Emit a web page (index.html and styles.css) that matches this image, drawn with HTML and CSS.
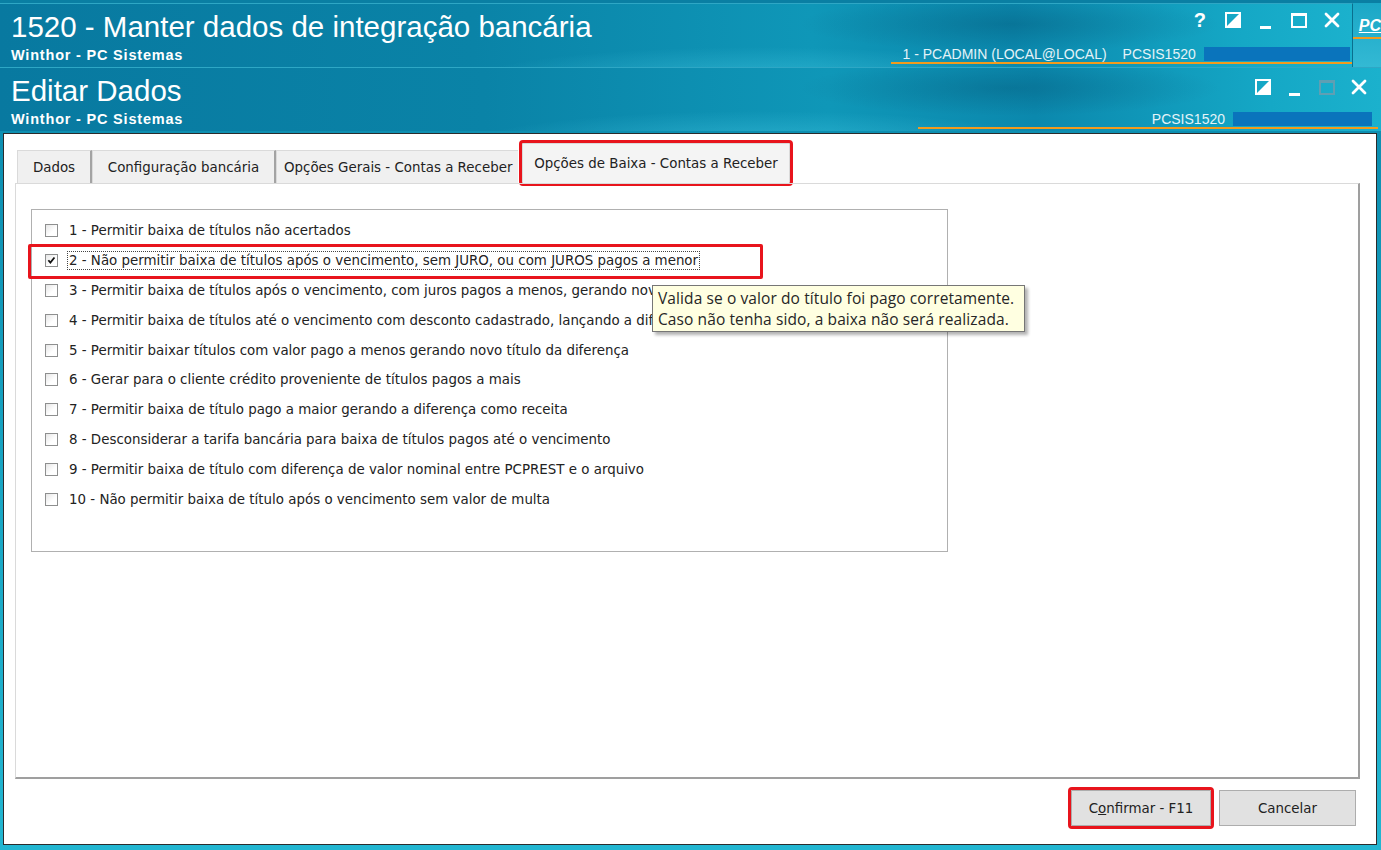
FILE: index.html
```html
<!DOCTYPE html>
<html lang="pt-BR">
<head>
<meta charset="utf-8">
<title>1520 - Manter dados de integração bancária</title>
<link rel="stylesheet" href="styles.css">
</head>
<body>
<div class="screen">
  <div class="top-row">
    <header class="head head--main">
      <div class="head-left">
        <div class="head-title">1520 - Manter dados de integração bancária</div>
        <div class="head-sub">Winthor - PC Sistemas</div>
      </div>
      <div class="head-right head-right--main">
        <div class="controls">
          <span class="ctl ctl-help">?</span>
          <svg class="ctl" viewBox="0 0 20 20"><rect x="3" y="3" width="14" height="14" fill="none" stroke="#fff" stroke-width="2"/><path d="M17 3 L17 17 L3 17 Z" fill="#fff"/></svg>
          <svg class="ctl" viewBox="0 0 20 20"><rect x="4" y="16" width="11" height="3" fill="#fff"/></svg>
          <svg class="ctl" viewBox="0 0 20 20"><rect x="3" y="4" width="14" height="13" fill="none" stroke="#fff" stroke-width="2"/><rect x="3" y="3" width="14" height="3" fill="#fff"/></svg>
          <svg class="ctl" viewBox="0 0 20 20"><path d="M4 4 L16 16 M16 4 L4 16" stroke="#fff" stroke-width="2.8" stroke-linecap="round"/></svg>
        </div>
        <div class="info">
          <span class="info-user">1 - PCADMIN (LOCAL@LOCAL)</span>
          <span class="info-code">PCSIS1520</span>
          <span class="bluebox bluebox--main"></span>
        </div>
      </div>
    </header>
    <div class="side"><div class="side-bar"><span class="side-link">PC</span></div></div>
  </div>

  <div class="win2">
    <header class="head head--sub">
      <div class="head-left">
        <div class="head-title">Editar Dados</div>
        <div class="head-sub">Winthor - PC Sistemas</div>
      </div>
      <div class="head-right head-right--sub">
        <div class="controls controls--sub">
          <svg class="ctl" viewBox="0 0 20 20"><rect x="3" y="3" width="14" height="14" fill="none" stroke="#fff" stroke-width="2"/><path d="M17 3 L17 17 L3 17 Z" fill="#fff"/></svg>
          <svg class="ctl" viewBox="0 0 20 20"><rect x="4" y="16" width="11" height="3" fill="#fff"/></svg>
          <svg class="ctl" viewBox="0 0 20 20"><rect x="3" y="4" width="14" height="13" fill="none" stroke="#5f9fb3" stroke-width="2"/><rect x="3" y="3" width="14" height="3" fill="#5f9fb3"/></svg>
          <svg class="ctl" viewBox="0 0 20 20"><path d="M4 4 L16 16 M16 4 L4 16" stroke="#fff" stroke-width="2.8" stroke-linecap="round"/></svg>
        </div>
        <div class="info info--sub">
          <span class="info-code">PCSIS1520</span>
          <span class="bluebox bluebox--sub"></span>
        </div>
      </div>
    </header>

    <div class="frame">
      <div class="dialog">
        <div class="tabs">
          <div class="tab tab--dados">Dados</div>
          <div class="tab tab--config">Configuração bancária</div>
          <div class="tab tab--gerais">Opções Gerais - Contas a Receber</div>
          <div class="tab tab--active">Opções de Baixa - Contas a Receber</div>
        </div>
        <div class="panel">
          <div class="group">
            <div class="opt"><span class="cb"></span><span class="lbl">1 - Permitir baixa de títulos não acertados</span></div>
            <div class="opt"><span class="cb cb--on"><svg viewBox="0 0 13 13"><path d="M2.8 6.2 L5.2 9 L10 3" fill="none" stroke="#111" stroke-width="2.1"/></svg></span><span class="lbl lbl--focus">2 - Não permitir baixa de títulos após o vencimento, sem JURO, ou com JUROS pagos a menor</span></div>
            <div class="opt"><span class="cb"></span><span class="lbl">3 - Permitir baixa de títulos após o vencimento, com juros pagos a menos, gerando nov</span></div>
            <div class="opt"><span class="cb"></span><span class="lbl">4 - Permitir baixa de títulos até o vencimento com desconto cadastrado, lançando a dif</span></div>
            <div class="opt"><span class="cb"></span><span class="lbl">5 - Permitir baixar títulos com valor pago a menos gerando novo título da diferença</span></div>
            <div class="opt"><span class="cb"></span><span class="lbl">6 - Gerar para o cliente crédito proveniente de títulos pagos a mais</span></div>
            <div class="opt"><span class="cb"></span><span class="lbl">7 - Permitir baixa de título pago a maior gerando a diferença como receita</span></div>
            <div class="opt"><span class="cb"></span><span class="lbl">8 - Desconsiderar a tarifa bancária para baixa de títulos pagos até o vencimento</span></div>
            <div class="opt"><span class="cb"></span><span class="lbl">9 - Permitir baixa de título com diferença de valor nominal entre PCPREST e o arquivo</span></div>
            <div class="opt"><span class="cb"></span><span class="lbl">10 - Não permitir baixa de título após o vencimento sem valor de multa</span></div>
            <div class="mark-row"></div>
            <div class="tooltip">Valida se o valor do título foi pago corretamente.<br>Caso não tenha sido, a baixa não será realizada.</div>
          </div>
        </div>
        <div class="buttons">
          <button class="btn btn--ok">C<u>o</u>nfirmar - F11</button>
          <button class="btn btn--cancel">Cancelar</button>
        </div>
      </div>
    </div>
  </div>
</div>
</body>
</html>
```

FILE: styles.css
```css
html, body {
  margin: 0;
  padding: 0;
}

body {
  width: 1381px;
  height: 850px;
  overflow: hidden;
  font-family: "Liberation Sans", Arial, sans-serif;
}

.screen {
  height: 850px;
  box-sizing: border-box;
  padding-top: 3px;
  display: flex;
  flex-direction: column;
  background: #0a7fa3;
}

.top-row {
  display: flex;
  height: 64px;
}

.head {
  display: flex;
  box-sizing: border-box;
  height: 64px;
  color: #fff;
  background:
    radial-gradient(ellipse 420px 50px at 760px 78px, rgba(80, 210, 235, 0.45), transparent 70%),
    radial-gradient(ellipse 300px 40px at 1010px 20px, rgba(0, 60, 90, 0.25), transparent 70%),
    linear-gradient(90deg, #0879a0 0%, #0a83a7 35%, #0f97b8 60%, #0b88ad 75%, #15a8c6 92%, #1bb1cd 100%);
}

.head--main {
  width: 1355px;
  border-top: 1px solid #2ea7c5;
  border-right: 1px solid #0a6f8e;
}

.head--sub {
  border-top: 1px solid #2ea7c5;
}

.head-left {
  padding-left: 11px;
}

.head-title {
  font-size: 29.5px;
  line-height: 32px;
  padding-top: 7px;
  white-space: nowrap;
}

.head-sub {
  font-size: 14.5px;
  font-weight: bold;
  letter-spacing: 0.8px;
  line-height: 16px;
  margin-top: 4px;
  white-space: nowrap;
}

.head-right {
  margin-left: auto;
  display: flex;
  flex-direction: column;
  justify-content: space-between;
  padding-bottom: 3px;
}

.head-right--main {
  width: 461px;
}

.head-right--sub {
  width: 460px;
  margin-right: 3px;
  padding-bottom: 2px;
}

.controls {
  display: flex;
  justify-content: flex-end;
  gap: 13px;
  padding-top: 6px;
  padding-right: 10px;
}

.controls--sub {
  gap: 12px;
  padding-top: 9px;
  padding-right: 9px;
}

.ctl {
  width: 20px;
  height: 20px;
  display: block;
}

.ctl-help {
  font-size: 20px;
  font-weight: bold;
  line-height: 20px;
  text-align: center;
}

.info {
  display: flex;
  align-items: center;
  justify-content: flex-end;
  height: 16px;
  padding-left: 5px;
  padding-right: 2px;
  border-bottom: 2px solid #f29b1d;
  font-size: 14px;
  color: #e4f3f8;
  white-space: nowrap;
}

.info--sub {
  padding-right: 6px;
}

.info-user {
  margin-right: 16px;
}

.info-code {
  margin-right: 8px;
}

.bluebox {
  display: block;
  height: 14px;
  background: #0a74bc;
}

.bluebox--main {
  width: 146px;
}

.bluebox--sub {
  width: 139px;
}

.side {
  flex: 1;
  background: linear-gradient(180deg, #1ba7c6, #33b9d4);
}

.side-bar {
  height: 32px;
  padding-left: 6px;
  padding-top: 2px;
  border-bottom: 2px solid #f29b1d;
}

.side-link {
  display: inline-block;
  margin-top: 12px;
  font-size: 16px;
  font-weight: bold;
  font-style: italic;
  text-decoration: underline;
  color: #fff;
}

.win2 {
  flex: 1;
  display: flex;
  flex-direction: column;
}

.frame {
  flex: 1;
  padding: 2px 4px 5px 3px;
  background: linear-gradient(180deg, #0d8fb1 0%, #18a6c4 50%, #22b6d1 100%);
  display: flex;
}

.dialog {
  flex: 1;
  border: 1px solid #2b2b2b;
  background: #fff;
  padding: 9px 16px 0 11px;
  display: flex;
  flex-direction: column;
  font-family: "DejaVu Sans", Verdana, sans-serif;
  font-size: 13.4px;
  color: #222;
}

.tabs {
  display: flex;
  align-items: flex-end;
  height: 40px;
  padding-left: 2px;
}

.tab {
  box-sizing: border-box;
  height: 33px;
  display: flex;
  align-items: center;
  justify-content: center;
  background: #f0f0f0;
  border-top: 1px solid #dadada;
  border-left: 1px solid #dadada;
  border-right: 2px solid #a3a3a3;
  white-space: nowrap;
}

.tab--dados {
  width: 75px;
}

.tab--config {
  width: 184px;
}

.tab--gerais {
  width: 242px;
  border-right: none;
  justify-content: flex-start;
  padding-left: 7px;
}

.tab--active {
  width: 268px;
  height: 40px;
  margin-left: 4px;
  background: #f4f4f4;
  border-right: 1px solid #dadada;
  outline: 3px solid #e8141c;
  border-radius: 1px;
}

.panel {
  box-sizing: border-box;
  height: 596px;
  border-top: 1px solid #dadada;
  border-left: 1px solid #dadada;
  border-right: 2px solid #9f9f9f;
  border-bottom: 2px solid #9f9f9f;
  padding: 25px 0 0 15px;
}

.group {
  position: relative;
  box-sizing: border-box;
  width: 917px;
  height: 343px;
  border: 1px solid #b0b0b0;
  padding-top: 6px;
}

.opt {
  height: 29.8px;
  display: flex;
  align-items: center;
  padding-left: 13px;
  white-space: nowrap;
}

.cb {
  box-sizing: border-box;
  width: 13px;
  height: 13px;
  border: 1px solid #8e8f8f;
  background: linear-gradient(135deg, #e6e6e6, #ffffff 60%);
  flex: none;
  display: block;
}

.cb svg {
  display: block;
  width: 11px;
  height: 11px;
}

.lbl {
  margin-left: 9px;
  padding: 1px 1px;
  border: 1px solid transparent;
}

.lbl--focus {
  border: 1px dotted #444;
}

.mark-row {
  position: absolute;
  left: -4px;
  top: 34px;
  width: 735px;
  height: 35px;
  box-sizing: border-box;
  border: 3px solid #e8141c;
  border-radius: 2px;
}

.tooltip {
  position: absolute;
  left: 620px;
  top: 75px;
  width: 373px;
  height: 47px;
  box-sizing: border-box;
  padding: 2px 5px;
  background: #ffffe1;
  border: 1px solid #767676;
  box-shadow: 3px 3px 3px rgba(0, 0, 0, 0.3);
  font-family: "Open Sans", "Noto Sans", sans-serif;
  font-size: 15.5px;
  letter-spacing: 0.1px;
  line-height: 21px;
  color: #262626;
  white-space: nowrap;
}

.buttons {
  display: flex;
  justify-content: flex-end;
  gap: 8px;
  margin-top: 11px;
  padding-right: 4px;
}

.btn {
  box-sizing: border-box;
  height: 36px;
  background: #e1e1e1;
  border: 1px solid #adadad;
  font-family: "DejaVu Sans", Verdana, sans-serif;
  font-size: 13.4px;
  color: #222;
  padding: 0;
}

.btn--ok {
  width: 140px;
  outline: 3px solid #e8141c;
  border-radius: 1px;
}

.btn--cancel {
  width: 137px;
}
```
